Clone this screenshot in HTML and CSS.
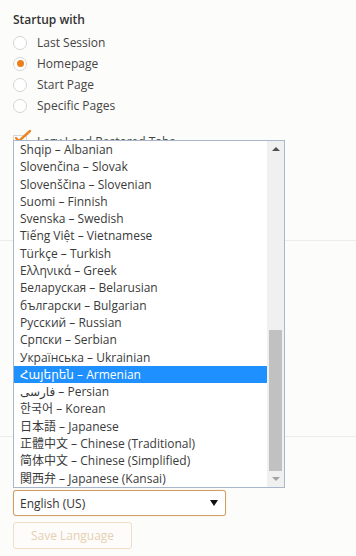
FILE: index.html
```html
<!DOCTYPE html>
<html lang="en">
<head>
    <meta charset="UTF-8">
    <meta name="viewport" content="width=device-width, initial-scale=1.0">
    <title>Settings</title>
    <link rel="stylesheet" href="styles.css">
</head>
<body>
    <div class="settings">
        <div class="section startup">
            <h3>Startup with</h3>
            <div class="radios">
                <label class="radio"><span class="dot"></span>Last Session</label>
                <label class="radio checked"><span class="dot"></span>Homepage</label>
                <label class="radio"><span class="dot"></span>Start Page</label>
                <label class="radio"><span class="dot"></span>Specific Pages</label>
            </div>
            <label class="check">
                <span class="box">
                    <svg class="tick" viewBox="0 0 18 14" fill="none" stroke="#e8862a" stroke-width="2.4" stroke-linecap="round">
                        <path d="M2 9l3 3L16 2"/>
                    </svg>
                </span>
                Lazy Load Restored Tabs
            </label>
        </div>
        <div class="divider first"></div>
        <div class="divider second"></div>

        <div class="lang-picker">
            <div class="lang-list">
                <ul class="options">
                    <li>Shqip – Albanian</li>
                    <li>Slovenčina – Slovak</li>
                    <li>Slovenščina – Slovenian</li>
                    <li>Suomi – Finnish</li>
                    <li>Svenska – Swedish</li>
                    <li>Tiếng Việt – Vietnamese</li>
                    <li>Türkçe – Turkish</li>
                    <li>Ελληνικά – Greek</li>
                    <li>Беларуская – Belarusian</li>
                    <li>български – Bulgarian</li>
                    <li>Русский – Russian</li>
                    <li>Српски – Serbian</li>
                    <li>Українська – Ukrainian</li>
                    <li class="selected">Հայերեն – Armenian</li>
                    <li>فارسی – Persian</li>
                    <li>한국어 – Korean</li>
                    <li>日本語 – Japanese</li>
                    <li>正體中文 – Chinese (Traditional)</li>
                    <li>简体中文 – Chinese (Simplified)</li>
                    <li>関西弁 – Japanese (Kansai)</li>
                </ul>
                <div class="scrollbar">
                    <div class="arrow up"></div>
                    <div class="track"><div class="thumb"></div></div>
                    <div class="arrow down"></div>
                </div>
            </div>
            <div class="select">
                <span>English (US)</span>
                <span class="caret"></span>
            </div>
        </div>
        <button class="save" disabled>Save Language</button>
    </div>
</body>
</html>
```

FILE: styles.css
```css
* {
    margin: 0;
    padding: 0;
    box-sizing: border-box;
    font-family: 'Open Sans', 'DejaVu Sans', 'Noto Sans CJK JP', sans-serif;
}
body {
    background: #fcfcfa;
    color: #444;
    font-size: 12px;
}
.settings {
    padding: 11px 0 0 13px;
}
.startup h3 {
    font-size: 12px;
    font-weight: 600;
    color: #333;
    line-height: 18px;
}
.radios {
    margin-top: 3px;
}
.radio, .check {
    display: flex;
    align-items: center;
    height: 21px;
    gap: 10px;
}
.dot {
    width: 14px;
    height: 14px;
    border: 1px solid #d6d6d6;
    border-radius: 50%;
    background: #fff;
    display: flex;
    align-items: center;
    justify-content: center;
}
.radio.checked .dot::after {
    content: '';
    width: 7px;
    height: 7px;
    border-radius: 50%;
    background: #ea7f1c;
}
.check {
    margin-top: 15px;
}
.box {
    width: 14px;
    height: 14px;
    border: 1px solid #d6d6d6;
    background: #fff;
    position: relative;
}
.tick {
    position: absolute;
    left: 0;
    top: -7px;
    width: 18px;
    height: 14px;
}
.divider {
    height: 1px;
    background: #ececea;
    margin-left: -13px;
}
.divider.first {
    margin-top: 88px;
}
.divider.second {
    margin-top: 195px;
}
.lang-picker {
    position: relative;
    width: 213px;
    margin-top: 53px;
}
.lang-list {
    position: absolute;
    left: 0;
    bottom: calc(100% + 2px);
    width: 272px;
    height: 348px;
    border: 1px solid #a9b7cc;
    background: #fff;
    display: flex;
}
.options {
    list-style: none;
    flex: 1;
}
.options li {
    height: 17.3px;
    line-height: 17.3px;
    padding-left: 6px;
    color: #3a3a3a;
    white-space: nowrap;
    overflow: hidden;
}
.options li.selected {
    background: #1e90ff;
    color: #fff;
}
.scrollbar {
    width: 17px;
    background: #f0f0f0;
    display: flex;
    flex-direction: column;
}
.arrow {
    height: 16px;
    display: flex;
    align-items: center;
    justify-content: center;
}
.arrow.up {
    height: 17px;
}
.arrow::after {
    content: '';
    border-left: 4px solid transparent;
    border-right: 4px solid transparent;
}
.arrow.up::after {
    border-bottom: 4px solid #505050;
}
.arrow.down::after {
    border-top: 4px solid #a3a3a3;
}
.track {
    flex: 1;
    padding: 0 2px;
}
.thumb {
    margin-top: 173px;
    height: 141px;
    background: #c1c1c1;
}
.select {
    height: 26px;
    border: 1px solid #cfa065;
    border-radius: 3px;
    box-shadow: 0 0 1px #e3bf8f;
    background: #fff;
    display: flex;
    align-items: center;
    justify-content: space-between;
    padding: 0 7px 0 6px;
    color: #333;
}
.caret {
    border-left: 4.5px solid transparent;
    border-right: 4.5px solid transparent;
    border-top: 6px solid #111;
}
.save {
    margin-top: 6px;
    width: 119px;
    height: 27px;
    border: 1px solid #f2dcc2;
    border-radius: 3px;
    background: #fdfcfa;
    color: #e6d0b2;
    font-size: 12px;
}
```
